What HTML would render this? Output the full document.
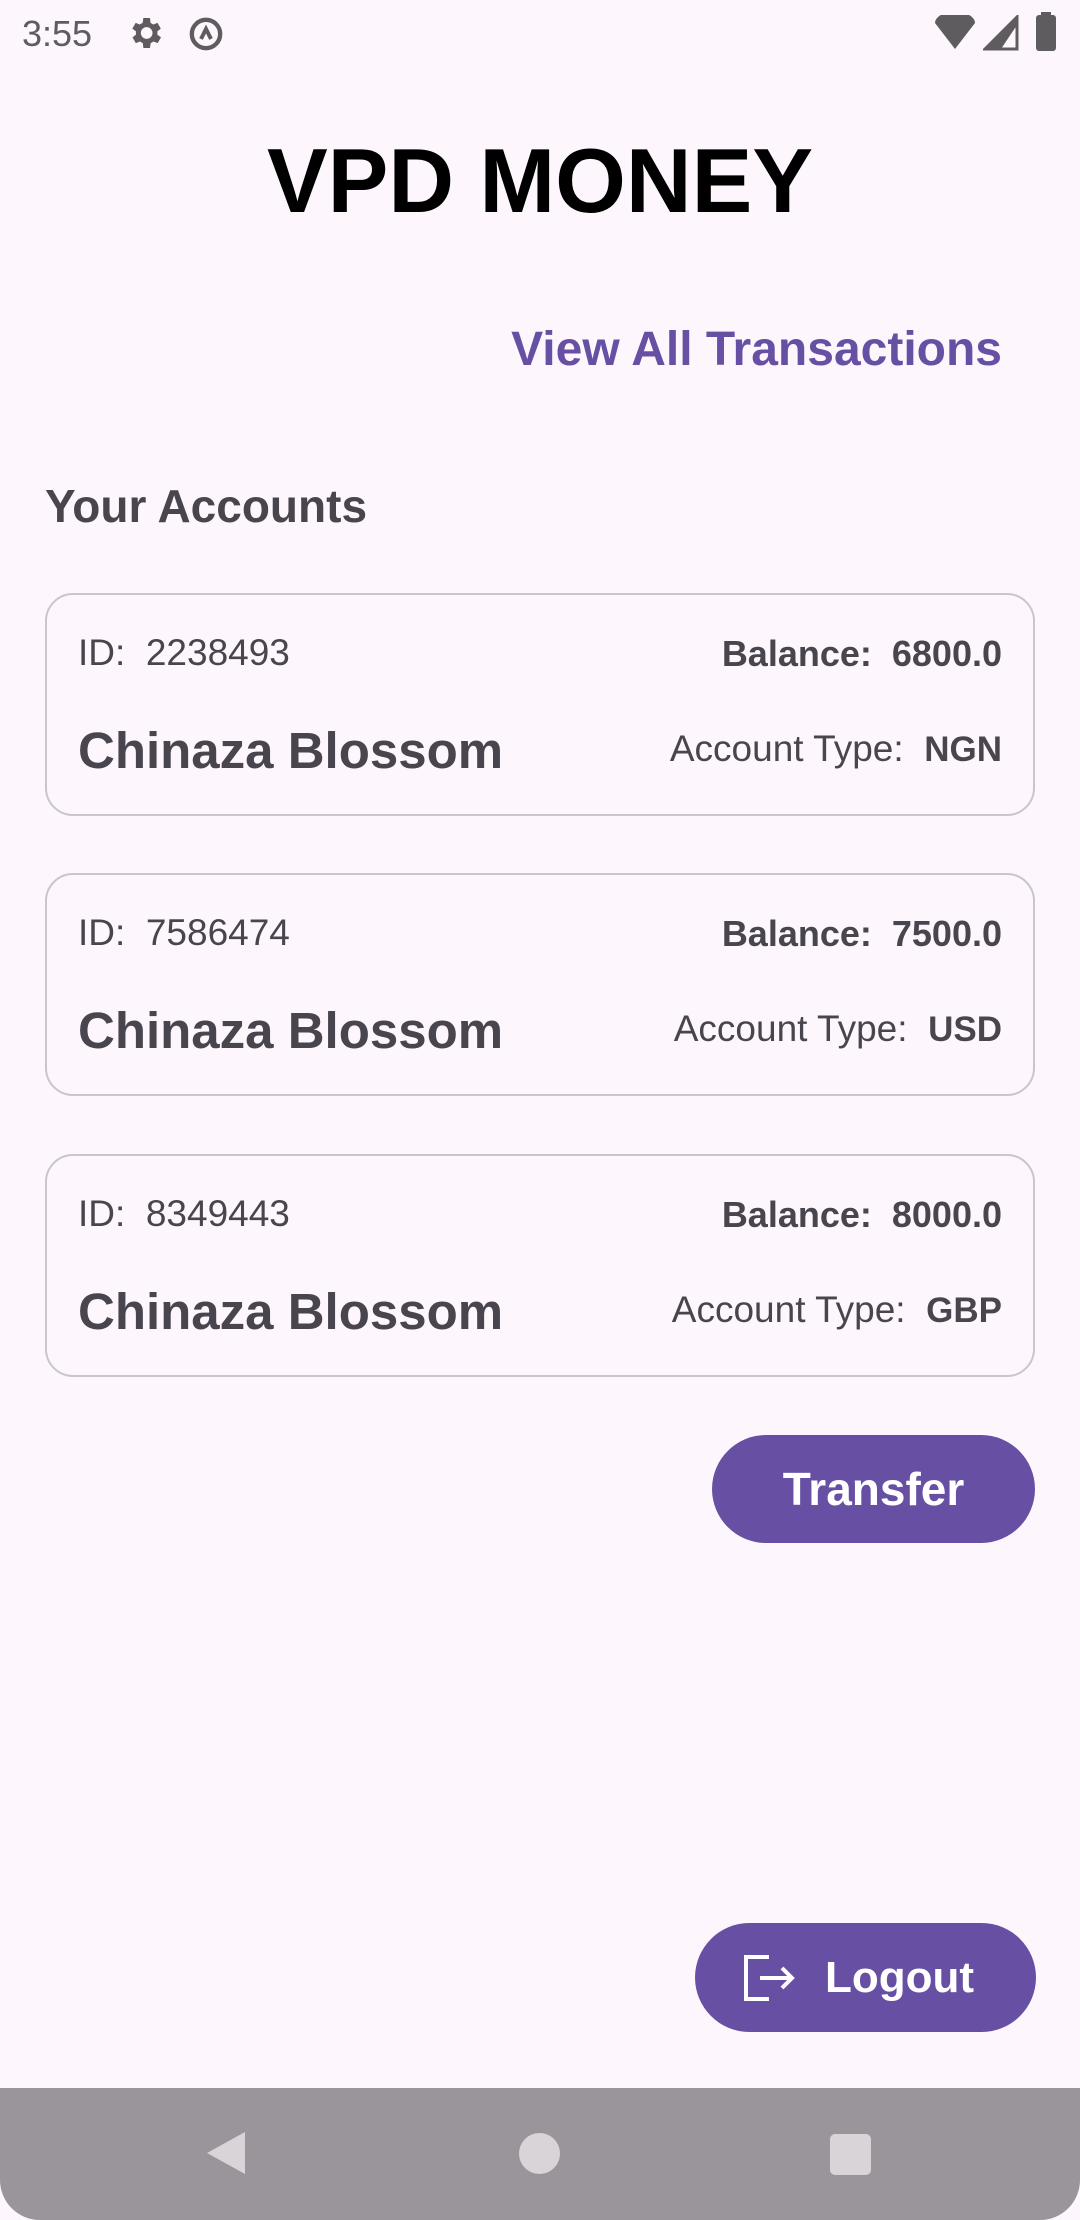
<!DOCTYPE html>
<html><head><meta charset="utf-8"><style>
*{margin:0;padding:0;box-sizing:border-box}
body{width:1080px;height:2220px;background:#fdf7fd;font-family:"Liberation Sans",Roboto,sans-serif;position:relative;overflow:hidden;color:#49454f}
.abs{position:absolute}
.card{position:absolute;left:45px;width:990px;height:223px;border:2px solid #cac4d0;border-radius:28px}
.id{position:absolute;left:31px;top:37px;font-size:37px;color:#49454f}
.bal{position:absolute;right:31px;top:38px;font-size:36px;font-weight:bold;color:#49454f}
.name{position:absolute;left:31px;top:126px;font-size:51px;font-weight:bold;color:#49454f}
.type{position:absolute;right:31px;top:133px;font-size:37px;color:#49454f}
.type b{font-size:35px}
.btn{position:absolute;background:#6750a4;color:#fff;border-radius:60px;font-weight:bold;display:flex;align-items:center;justify-content:center}
</style></head><body>
<div class="abs" style="left:22px;top:13px;font-size:36px;color:#5f5c60">3:55</div>
<svg class="abs" style="left:125px;top:13px" width="40" height="40" viewBox="0 0 24 24"><path fill="#5f5c60" d="M19.4 13a7.5 7.5 0 0 0 0-2l2.1-1.6-2-3.5-2.5 1a7 7 0 0 0-1.7-1L15 3h-4l-.4 2.9a7 7 0 0 0-1.7 1l-2.5-1-2 3.5L6.6 11a7.5 7.5 0 0 0 0 2l-2.1 1.6 2 3.5 2.5-1a7 7 0 0 0 1.7 1L11 21h4l.4-2.9a7 7 0 0 0 1.7-1l2.5 1 2-3.5zM13 15.5a3.5 3.5 0 1 1 0-7 3.5 3.5 0 0 1 0 7z"/></svg>
<svg class="abs" style="left:186px;top:14px" width="40" height="40" viewBox="0 0 24 24"><circle cx="12" cy="12" r="8.5" fill="none" stroke="#5f5c60" stroke-width="2.6"/><path d="M9 15l3-6 3 6" fill="none" stroke="#5f5c60" stroke-width="2.4"/></svg>
<svg class="abs" style="left:935px;top:15px" width="40" height="36" viewBox="0 0 20 18"><path fill="#5f5c60" d="M0 4a7 4 0 0 1 20 0L10 17z"/></svg>
<svg class="abs" style="left:983px;top:15px" width="36" height="36" viewBox="0 0 18 18"><path fill="none" stroke="#5f5c60" stroke-width="1.5" d="M1 17L17 1v16z"/><path fill="#5f5c60" d="M1 17L17 1v4L9 17z"/></svg>
<div class="abs" style="left:1036px;top:15px;width:20px;height:36px;background:#5f5c60;border-radius:3px"></div>
<div class="abs" style="left:1041px;top:12px;width:10px;height:5px;background:#5f5c60"></div>

<div class="abs" style="left:0;width:1080px;top:130px;text-align:center;font-size:91px;font-weight:bold;color:#000">VPD MONEY</div>
<div class="abs" style="right:78px;top:322px;font-size:48px;font-weight:bold;color:#6750a4">View All Transactions</div>
<div class="abs" style="left:45px;top:479px;font-size:46px;font-weight:bold;color:#49454f">Your Accounts</div>

<div class="card" style="top:593px"><div class="id">ID:&nbsp; 2238493</div><div class="bal">Balance:&nbsp; 6800.0</div><div class="name">Chinaza Blossom</div><div class="type">Account Type:&nbsp; <b>NGN</b></div></div>
<div class="card" style="top:873px"><div class="id">ID:&nbsp; 7586474</div><div class="bal">Balance:&nbsp; 7500.0</div><div class="name">Chinaza Blossom</div><div class="type">Account Type:&nbsp; <b>USD</b></div></div>
<div class="card" style="top:1154px"><div class="id">ID:&nbsp; 8349443</div><div class="bal">Balance:&nbsp; 8000.0</div><div class="name">Chinaza Blossom</div><div class="type">Account Type:&nbsp; <b>GBP</b></div></div>

<div class="btn" style="left:712px;top:1435px;width:323px;height:108px;font-size:46px">Transfer</div>
<div class="btn" style="left:695px;top:1923px;width:341px;height:109px;font-size:44px;font-weight:normal;justify-content:flex-start;padding-left:49px">
<svg width="52" height="46" viewBox="0 0 52 46" style="margin-right:29px"><path d="M25 2H2v42h23M16 23h32M38 13l10 10-10 10" fill="none" stroke="#fff" stroke-width="4"/></svg><span style="font-weight:bold">Logout</span></div>

<div class="abs" style="left:0;top:2088px;width:1080px;height:132px;background:#9a959a;border-radius:0 0 40px 40px"></div>
<svg class="abs" style="left:205px;top:2130px" width="42" height="46" viewBox="0 0 42 46"><path d="M40 2v42L2 23z" fill="#d8d4d8"/></svg>
<div class="abs" style="left:519px;top:2133px;width:41px;height:41px;border-radius:50%;background:#d8d4d8"></div>
<div class="abs" style="left:830px;top:2134px;width:41px;height:41px;border-radius:5px;background:#d8d4d8"></div>
</body></html>
